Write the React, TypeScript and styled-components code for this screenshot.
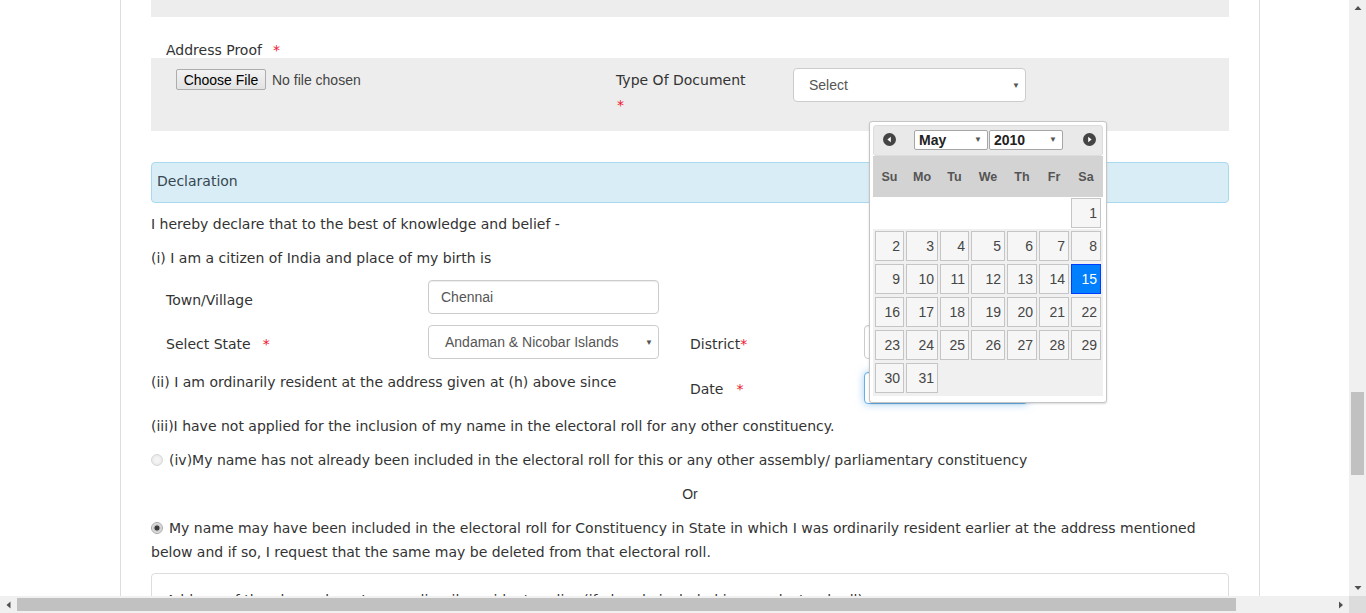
import React from "react";
import styled, { createGlobalStyle } from "styled-components";

const GlobalStyle = createGlobalStyle`
  html, body { margin: 0; padding: 0; overflow: hidden; background: #fff; }
  * { box-sizing: border-box; }
`;

const Screen = styled.div`
  display: grid;
  grid-template-columns: 1349px 17px;
  grid-template-rows: 596px 17px;
  width: 1366px;
  height: 613px;
`;

const Viewport = styled.div`
  position: relative;
  overflow: hidden;
  background: #fff;
`;

const Container = styled.div`
  margin-left: 120px;
  width: 1140px;
  min-height: 100%;
  border-left: 1px solid #ddd;
  border-right: 1px solid #ddd;
  padding: 0 30px 40px;
  font-family: "DejaVu Sans", Verdana, sans-serif;
  font-size: 14px;
  color: #333;
`;

const TopPanel = styled.div`
  height: 17px;
  background: #ededed;
`;

const ProofLabel = styled.div`
  margin-top: 25px;
  padding-left: 15px;
  line-height: 16px;
`;

const Req = styled.span<{ $gap?: number; $block?: boolean }>`
  color: #f0142d;
  font-size: 14px;
  margin-left: ${(p) => p.$gap ?? 0}px;
  display: ${(p) => (p.$block ? "block" : "inline")};
  padding-left: ${(p) => (p.$block ? 1 : 0)}px;
`;

const ProofPanel = styled.div`
  display: grid;
  grid-template-columns: 465px 177px 233px;
  align-items: start;
  height: 73px;
  padding-top: 10px;
  background: #ededed;
`;

const FileCell = styled.div`
  display: flex;
  align-items: center;
  gap: 6px;
  margin-top: 1px;
  padding-left: 25px;
  font: 14px "Liberation Sans", Arial, sans-serif;
  color: #444;
`;

const FileButton = styled.span`
  display: inline-flex;
  align-items: center;
  justify-content: center;
  width: 90px;
  height: 21px;
  border: 1px solid #adadad;
  border-radius: 2px;
  background: linear-gradient(#f2f2f2, #e3e3e3);
  color: #000;
`;

const DocLabel = styled.div`
  line-height: 25px;
`;

const SelectBox = styled.div<{ $pad?: number }>`
  display: flex;
  align-items: center;
  justify-content: space-between;
  height: 34px;
  border: 1px solid #ccc;
  border-radius: 4px;
  background: #fff;
  padding: 0 5px 0 ${(p) => p.$pad ?? 15}px;
  font: 14px "Liberation Sans", Arial, sans-serif;
  color: #555;
`;

const Caret = styled.span`
  font-size: 8px;
  color: #555;
`;

const DeclBox = styled.div`
  display: flex;
  align-items: center;
  height: 41px;
  margin-top: 31px;
  padding: 0 5px 3px;
  background: #d9edf7;
  border: 1px solid #a9d9ef;
  border-radius: 4px;
  color: #37474f;
`;

const Para = styled.p<{ $top?: number; $bottom?: number; $center?: boolean }>`
  margin: ${(p) => p.$top ?? 0}px 0 ${(p) => p.$bottom ?? 10}px;
  line-height: 24px;
  text-align: ${(p) => (p.$center ? "center" : "left")};
`;

const OrText = styled(Para)`
  font: 14px/24px "Liberation Sans", Arial, sans-serif;
`;

const FormRow = styled.div<{ $bottom?: number }>`
  display: grid;
  grid-template-columns: 277px 231px 31px 174px 231px;
  align-items: start;
  margin-bottom: ${(p) => p.$bottom ?? 11}px;
`;

const FieldLabel = styled.div<{ $col?: number; $pad?: number }>`
  grid-column: ${(p) => p.$col ?? 1};
  padding: ${(p) => p.$pad ?? 7}px 0 0 ${(p) => (p.$col && p.$col > 1 ? 0 : 15)}px;
  line-height: 24px;
`;

const TextInput = styled.div<{ $focus?: boolean; $col?: number; $w?: number }>`
  grid-column: ${(p) => p.$col ?? 2};
  width: ${(p) => (p.$w ? `${p.$w}px` : "auto")};
  height: ${(p) => (p.$focus ? 32 : 34)}px;
  display: flex;
  align-items: center;
  padding-left: 12px;
  border: 1px solid ${(p) => (p.$focus ? "#66afe9" : "#ccc")};
  border-radius: 4px;
  background: #fff;
  box-shadow: ${(p) =>
    p.$focus ? "inset 0 1px 1px rgba(0,0,0,.075), 0 0 8px rgba(102,175,233,.6)" : "inset 0 1px 1px rgba(0,0,0,.075)"};
  font: 14px "Liberation Sans", Arial, sans-serif;
  color: #555;
`;

const SpanText = styled.div`
  grid-column: 1 / 3;
  line-height: 20px;
`;

const RadioLine = styled.p`
  margin: 0 0 10px;
  line-height: 24px;
`;

const Radio = styled.span<{ $checked?: boolean }>`
  display: inline-block;
  width: 12px;
  height: 12px;
  margin-right: 6px;
  vertical-align: -1px;
  border-radius: 50%;
  border: 1px solid ${(p) => (p.$checked ? "#a6a6a6" : "#d6d6d6")};
  background: ${(p) =>
    p.$checked
      ? "radial-gradient(circle, #3c3c3c 0 2.2px, #bdbdbd 2.8px, #e9e9e9 5px)"
      : "radial-gradient(circle, #f4f4f4 0 2px, #e6e6e6 6px)"};
`;

const AddrBox = styled.div`
  height: 120px;
  margin-top: -1px;
  border: 1px solid #ddd;
  border-radius: 4px;
  padding: 14px 14px;
  line-height: 24px;
`;

/* ---------- date picker ---------- */

const Picker = styled.div`
  position: absolute;
  left: 869px;
  top: 121px;
  width: 238px;
  height: 282px;
  padding: 3px;
  background: #fff;
  border: 1px solid #c5c5c5;
  border-radius: 3px;
  box-shadow: 0 1px 2px rgba(0, 0, 0, 0.15);
  font-family: "Liberation Sans", Arial, sans-serif;
`;

const PickerHead = styled.div`
  display: flex;
  align-items: center;
  height: 31px;
  padding: 0 0 2px 9px;
  background: #e9e9e9;
  border: 1px solid #dddddd;
  border-radius: 3px;
`;

const NavIcon = styled.svg<{ $left: number }>`
  display: block;
  margin-left: ${(p) => p.$left}px;
  flex: none;
`;

const MiniSelect = styled.div<{ $left: number }>`
  display: flex;
  align-items: center;
  justify-content: space-between;
  width: 74px;
  height: 20px;
  margin-left: ${(p) => p.$left}px;
  padding: 0 5px 0 4px;
  border: 1px solid #a6a6a6;
  border-radius: 2px;
  background: #fff;
  font-weight: bold;
  font-size: 14px;
  color: #222;
`;

const cols = "29px 32px 29px 34px 30px 30px 30px";

const DowRow = styled.div`
  display: grid;
  grid-template-columns: ${cols};
  column-gap: 2px;
  align-items: center;
  height: 41px;
  padding: 0 2px;
  background: #d3d3d3;
  font-weight: bold;
  font-size: 12.5px;
  color: #555;
  text-align: center;
`;

const DayGrid = styled.div`
  display: grid;
  grid-template-columns: ${cols};
  grid-auto-rows: 30px;
  gap: 3px 2px;
  padding: 1px 2px 3px;
  background: linear-gradient(#fff 0 32px, #f0f0f0 32px);
`;

const Blank = styled.div<{ $span: number }>`
  grid-column: span ${(p) => p.$span};
`;

const Day = styled.div<{ $active?: boolean }>`
  display: flex;
  align-items: center;
  justify-content: flex-end;
  padding-right: 3px;
  border: 1px solid ${(p) => (p.$active ? "#003eff" : "#c5c5c5")};
  background: ${(p) => (p.$active ? "#007fff" : "#f6f6f6")};
  color: ${(p) => (p.$active ? "#fff" : "#454545")};
  font-size: 14px;
`;

/* ---------- scrollbars ---------- */

const VScroll = styled.div`
  display: flex;
  flex-direction: column;
  align-items: center;
  background: #f0f0f0;
`;

const HScroll = styled.div`
  display: flex;
  align-items: center;
  background: #f0f0f0;
`;

const ArrowBtn = styled.div`
  display: flex;
  align-items: center;
  justify-content: center;
  width: 17px;
  height: 17px;
  flex: none;
`;

const VTrack = styled.div`
  flex: 1;
  width: 100%;
  padding: 375px 2px 0;
`;

const VThumb = styled.div`
  height: 83px;
  background: #c1c1c1;
`;

const HTrack = styled.div`
  flex: 1;
  height: 100%;
  display: flex;
  align-items: center;
`;

const HThumb = styled.div`
  width: 1219px;
  height: 13px;
  background: #c1c1c1;
`;

const Corner = styled.div`
  background: #dcdcdc;
`;

const Tri = ({ dir }: { dir: "up" | "down" | "left" | "right" }) => {
  const d = {
    up: "M0.5 5 L4 1 L7.5 5 Z",
    down: "M0.5 2 L4 6 L7.5 2 Z",
    left: "M5.5 0.5 L1.5 4 L5.5 7.5 Z",
    right: "M2 0.5 L6 4 L2 7.5 Z",
  }[dir];
  return (
    <svg width="8" height="8" viewBox="0 0 8 8">
      <path d={d} fill="#505050" />
    </svg>
  );
};

const Nav = ({ dir, left }: { dir: "prev" | "next"; left: number }) => (
  <NavIcon $left={left} width="13" height="13" viewBox="0 0 13 13">
    <circle cx="6.5" cy="6.5" r="6.5" fill="#444" />
    <path d={dir === "prev" ? "M7.8 3.8 L4.4 6.5 L7.8 9.2 Z" : "M5.2 3.8 L8.6 6.5 L5.2 9.2 Z"} fill="#fff" />
  </NavIcon>
);

const DatePicker = () => {
  const days = Array.from({ length: 31 }, (_, i) => i + 1);
  return (
    <Picker>
      <PickerHead>
        <Nav dir="prev" left={0} />
        <MiniSelect $left={18}>
          May<Caret>▼</Caret>
        </MiniSelect>
        <MiniSelect $left={1}>
          2010<Caret>▼</Caret>
        </MiniSelect>
        <Nav dir="next" left={20} />
      </PickerHead>
      <DowRow>
        {["Su", "Mo", "Tu", "We", "Th", "Fr", "Sa"].map((d) => (
          <span key={d}>{d}</span>
        ))}
      </DowRow>
      <DayGrid>
        <Blank $span={6} />
        {days.map((d) => (
          <Day key={d} $active={d === 15}>
            {d}
          </Day>
        ))}
      </DayGrid>
    </Picker>
  );
};

export default function App() {
  return (
    <>
      <GlobalStyle />
      <Screen>
        <Viewport>
          <Container>
            <TopPanel />
            <ProofLabel>
              Address Proof<Req $gap={11}>*</Req>
            </ProofLabel>
            <ProofPanel>
              <FileCell>
                <FileButton>Choose File</FileButton>
                No file chosen
              </FileCell>
              <DocLabel>
                Type Of Document
                <Req $block>*</Req>
              </DocLabel>
              <SelectBox>
                Select<Caret>▼</Caret>
              </SelectBox>
            </ProofPanel>

            <DeclBox>Declaration</DeclBox>
            <Para $top={9}>I hereby declare that to the best of knowledge and belief -</Para>
            <Para>(i) I am a citizen of India and place of my birth is</Para>

            <FormRow>
              <FieldLabel $pad={8}>Town/Village</FieldLabel>
              <TextInput>Chennai</TextInput>
            </FormRow>
            <FormRow $bottom={13}>
              <FieldLabel>
                Select State<Req $gap={12}>*</Req>
              </FieldLabel>
              <SelectBox $pad={16}>
                Andaman &amp; Nicobar Islands<Caret>▼</Caret>
              </SelectBox>
              <FieldLabel $col={4}>
                District<Req>*</Req>
              </FieldLabel>
              <TextInput $col={5} />
            </FormRow>
            <FormRow $bottom={10}>
              <SpanText>(ii) I am ordinarily resident at the address given at (h) above since</SpanText>
              <FieldLabel $col={4} $pad={5}>
                Date<Req $gap={13}>*</Req>
              </FieldLabel>
              <TextInput $col={5} $focus $w={164} />
            </FormRow>

            <Para>(iii)I have not applied for the inclusion of my name in the electoral roll for any other constituency.</Para>
            <RadioLine>
              <Radio />
              (iv)My name has not already been included in the electoral roll for this or any other assembly/ parliamentary constituency
            </RadioLine>
            <OrText $center>Or</OrText>
            <RadioLine>
              <Radio $checked />
              My name may have been included in the electoral roll for Constituency in State in which I was ordinarily resident earlier at the address mentioned below and if so, I request that the same may be deleted from that electoral roll.
            </RadioLine>
            <AddrBox>Address of the place where I was ordinarily resident earlier (if already included in any electoral roll)</AddrBox>
          </Container>
          <DatePicker />
        </Viewport>
        <VScroll>
          <ArrowBtn>
            <Tri dir="up" />
          </ArrowBtn>
          <VTrack>
            <VThumb />
          </VTrack>
          <ArrowBtn>
            <Tri dir="down" />
          </ArrowBtn>
        </VScroll>
        <HScroll>
          <ArrowBtn>
            <Tri dir="left" />
          </ArrowBtn>
          <HTrack>
            <HThumb />
          </HTrack>
          <ArrowBtn>
            <Tri dir="right" />
          </ArrowBtn>
        </HScroll>
        <Corner />
      </Screen>
    </>
  );
}
